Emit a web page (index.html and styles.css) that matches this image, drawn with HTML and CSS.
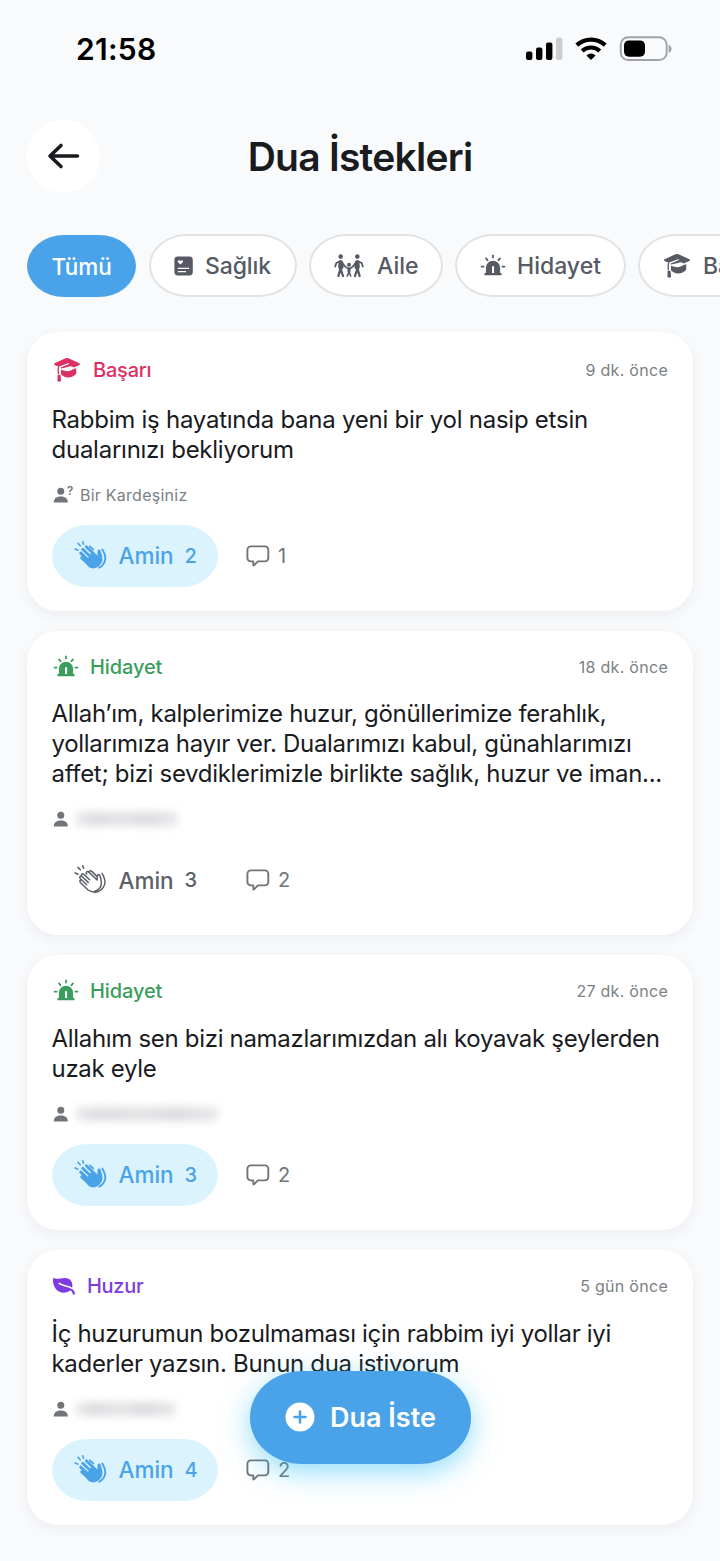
FILE: index.html
```html
<!DOCTYPE html>
<html lang="tr">
<head>
<meta charset="utf-8">
<title>Dua İstekleri</title>
<link rel="stylesheet" href="styles.css">
</head>
<body>
<svg class="sprite" aria-hidden="true">
  <symbol id="cap" viewBox="0 0 28 26">
    <path d="M1.6 6.2 12.5 1.3q1.5-.7 3 0L26.4 6.2q1.5.8 0 1.7L20.6 10.6c-1.7-1.6-3.6-1.7-5.6-.6L8.2 11.6l-1-.9 8.3-3.4c1-.6.5-1.4-.5-1.1L5.6 9.7 1.6 8q-1.4-.9 0-1.8Z" fill="currentColor"/>
    <path d="M8 12.8c3 .6 5.4 1.9 8.2 1.2 3.2-.8 4-2.3 7-2.8v5.6c-1.7 2.5-5 3.6-8 3.6-3.2 0-5.7-1.1-7.2-3.1Z" fill="currentColor"/>
    <path d="M5.6 9.8c-.7 2.4-.5 4.9-.2 7.4" fill="none" stroke="currentColor" stroke-width="1.3"/>
    <path d="M4.6 17.8h2.9l.5 5.8q-.6 1.2-1.8 1.2t-1.8-1.2Z" fill="currentColor"/>
  </symbol>
  <symbol id="siren" viewBox="0 0 26 24">
    <path fill-rule="evenodd" d="M5.9 19v-5.2a7.1 7.1 0 0 1 14.2 0V19h1.4v2.2H4.5V19ZM12 12.3v6.7h2.1v-6.7Z" fill="currentColor"/>
    <path d="M13 1.4v2M6 4.4l1.5 1.8M20 4.4l-1.5 1.8M1.6 12.6h2M22.4 12.6h2" fill="none" stroke="currentColor" stroke-width="1.8" stroke-linecap="round"/>
  </symbol>
  <symbol id="family" viewBox="0 0 30 24">
    <g fill="none" stroke="currentColor" stroke-linecap="round" stroke-linejoin="round">
      <path d="M6.5 7.5v7L4.4 22M6.5 14.5 9 22M23.5 7.5v7L25.6 22M23.5 14.5 21 22" stroke-width="2.3"/>
      <path d="M6 7.3 2.3 9 1.2 12.5M7.5 7.5 10.5 12M24 7.3 27.7 9l1.1 3.5M22.5 7.5 19.5 12" stroke-width="1.8"/>
      <path d="M15 14v4l-1.7 4M15 18l1.7 4M10.8 12.2 13.5 14.3h3l2.7-2.1" stroke-width="1.6"/>
    </g>
    <path d="M4.6 6.8h4l1 6.5-1.1 2H5l-.8-2ZM21.4 6.8h4l.4 6.5-.8 2h-3.5l-1.1-2ZM13.3 13.8h3.4l-.3 5h-2.8Z" fill="currentColor"/>
    <circle cx="6.7" cy="2.6" r="2.3" fill="currentColor"/><circle cx="23.3" cy="2.6" r="2.3" fill="currentColor"/><circle cx="15" cy="10.7" r="2" fill="currentColor"/>
  </symbol>
  <symbol id="record" viewBox="0 0 20 20">
    <rect x=".4" y=".6" width="18.4" height="18.8" rx="3.4" fill="currentColor"/>
    <path d="M6.4 8.6 4 6.2C3 4.9 5.1 3.4 6.4 4.9 7.7 3.4 9.8 4.9 8.8 6.2Z" fill="#fff"/>
    <path d="M3.8 12.4h11.4M3.8 15.7h8.2" stroke="#fff" stroke-width="1.2" fill="none"/>
  </symbol>
  <symbol id="leaf" viewBox="0 0 24 20">
    <path d="M1.2 1.7C5 4.2 9.500 1.400 14 2c4.600.8 6.600 4 6.400 8.600-.3 1.600-.8 2.800-1.500 3.500C14 18.200 7.500 17.400 4 13.300 1.600 10.300.4 5.500 1.200 1.700Z" fill="currentColor"/>
    <path d="M19.300 13.800q2 1 2.500 3.700" fill="none" stroke="currentColor" stroke-width="2.300" stroke-linecap="round"/>
    <path d="M7.200 7.400c4 3.400 9 1.600 12.600 4.800" fill="none" stroke="#fff" stroke-width="1.500" stroke-linecap="round"/>
  </symbol>
  <symbol id="person" viewBox="0 0 16 16">
    <circle cx="7.800" cy="4.300" r="3.500" fill="currentColor"/>
    <path d="M.8 15.400C.8 11.800 3 9.500 7.800 9.500s7 2.300 7 5.900Z" fill="currentColor"/>
  </symbol>
  <symbol id="bubble" viewBox="0 0 24 22">
    <path d="M4.700 1.400h14.300a3.300 3.300 0 0 1 3.300 3.300v8.400a3.300 3.300 0 0 1-3.300 3.300h-7.100l-3.900 3.900q-.7.500-.7-.4v-3.500H4.700a3.300 3.300 0 0 1-3.300-3.300V4.700a3.300 3.300 0 0 1 3.300-3.300Z" fill="none" stroke="currentColor" stroke-width="1.900" stroke-linejoin="round"/>
  </symbol>
  <symbol id="sparks" viewBox="0 0 34 32">
    <path d="M2.200 8.900 5 10.200M5.100 3.400l2.100 2.400M9.800 1.700l.7 2.600" fill="none" stroke="currentColor" stroke-width="1.600" stroke-linecap="round"/>
  </symbol>
  <symbol id="clap" viewBox="0 0 34 32">
    <use href="#sparks"/>
    <path d="M13.300 6.800 23 16M9.700 9.200 21 20M7.700 13.100 19 23.500M8.700 17.800 17 25.300" fill="none" stroke="currentColor" stroke-width="2.900" stroke-linecap="round"/>
    <path d="M18.500 12.500 24.300 16 24.600 11c.2-2.100 2.500-2 3.100 0 1.100 4.200 3.200 8 .4 12.600-3 4.900-8 6.200-12.600 3.200L12 22.500Z" fill="currentColor"/>
    <path d="M16.800 6.300 20.300 9.500" fill="none" stroke="currentColor" stroke-width="1.800" stroke-linecap="round"/>
    <path d="M29.300 9.500C31.500 13 33 16 32.100 20c-.8 3.600-3 6.200-5.800 7.700" fill="none" stroke="currentColor" stroke-width="1.900" stroke-linecap="round"/>
  </symbol>
  <symbol id="clap-line" viewBox="0 0 34 32">
    <use href="#sparks"/>
    <g fill="none" stroke="currentColor" stroke-width="1.500" stroke-linecap="round" stroke-linejoin="round">
      <path d="m16.600 15.800-5.700-5.400c-1.800-1.600-3.500.6-1.900 2.100l6.200 5.900M9 12.500c-1.900-1.100-3 1-1.600 2.300l6.300 5.900M8.600 16.100c-1.800-.6-2.400 1.300-1 2.600l7.200 7c4 3.500 9.600 2 12.400-2.300 2.400-3.900.9-7.500-.1-11.400-.5-2-2.500-1.800-2.700 0l-.3 4-8.200-7.900c-1.700-1.500-3.400.2-2.300 1.900M15.700 7.900c.8-1.800 2.400-1.300 3.400-.3l4.500 4.500"/>
      <path d="M29.100 9.400c2.200 3.900 3.800 7.100 2.600 11-1.300 4.100-5.300 7.800-10.200 8"/>
    </g>
  </symbol>
</svg>

<div class="statusbar">
  <span class="clock">21:58</span>
  <svg class="signal" viewBox="0 0 38 26"><rect x="1" y="15.500" width="6.400" height="8.500" rx="2"/><rect x="11" y="11.500" width="6.400" height="12.500" rx="2"/><rect x="21" y="6.500" width="6.400" height="17.500" rx="2"/><rect class="off" x="31" y="1.500" width="6.400" height="22.500" rx="2"/></svg>
  <svg class="wifi" viewBox="0 0 34 26"><path d="M2.800 9.100C10.800 1.700 23.200 1.700 31.200 9.100" stroke-width="4.300"/><path d="M8.200 15C13.200 10.300 20.800 10.300 25.800 15" stroke-width="4.100"/><path class="dot" d="M12.400 19.400q4.600-3.800 9.200 0L17 24.100Z"/></svg>
  <svg class="battery" viewBox="0 0 54 26"><rect class="shell" x="1.700" y="1.200" width="46" height="22.800" rx="7.500"/><rect x="5" y="4.400" width="21" height="16.400" rx="5"/><path class="tip" d="M49.700 8.700q2.800 1 2.800 4t-2.800 4Z"/></svg>
</div>

<header class="topbar">
  <span class="back"><svg viewBox="0 0 34 28"><path d="M14 3.500 3 14l11 10.500M3.500 14H30.500"/></svg></span>
  <h1>Dua İstekleri</h1>
</header>

<nav class="chips">
  <span class="chip active">Tümü</span>
  <span class="chip health"><svg class="i-record"><use href="#record"/></svg><b>Sağlık</b></span>
  <span class="chip kin"><svg class="i-family"><use href="#family"/></svg><b>Aile</b></span>
  <span class="chip guide"><svg class="i-siren"><use href="#siren"/></svg><b>Hidayet</b></span>
  <span class="chip success"><svg class="i-cap"><use href="#cap"/></svg><b>Başarı</b></span>
</nav>

<main class="feed">
  <article class="card">
    <div class="head tall red"><svg class="i-cap"><use href="#cap"/></svg><b>Başarı</b><time>9 dk. önce</time></div>
    <p class="body loose"><span>Rabbim iş hayatında bana yeni bir yol nasip etsin</span><span>dualarınızı bekliyorum</span></p>
    <div class="author"><svg class="i-person"><use href="#person"/></svg><i>?</i><span class="name">Bir Kardeşiniz</span></div>
    <div class="actions"><span class="amin on"><svg><use href="#clap"/></svg><b>Amin</b><em>2</em></span><svg class="i-bubble"><use href="#bubble"/></svg><span class="count">1</span></div>
  </article>
  <article class="card">
    <div class="head green"><svg class="i-siren"><use href="#siren"/></svg><b>Hidayet</b><time>18 dk. önce</time></div>
    <p class="body"><span>Allah’ım, kalplerimize huzur, gönüllerimize ferahlık,</span><span>yollarımıza hayır ver. Dualarımızı kabul, günahlarımızı</span><span>affet; bizi sevdiklerimizle birlikte sağlık, huzur ve iman...</span></p>
    <div class="author"><svg class="i-person"><use href="#person"/></svg><span class="masked m1"></span></div>
    <div class="actions"><span class="amin"><svg><use href="#clap-line"/></svg><b>Amin</b><em>3</em></span><svg class="i-bubble"><use href="#bubble"/></svg><span class="count">2</span></div>
  </article>
  <article class="card">
    <div class="head green"><svg class="i-siren"><use href="#siren"/></svg><b>Hidayet</b><time>27 dk. önce</time></div>
    <p class="body"><span>Allahım sen bizi namazlarımızdan alı koyavak şeylerden</span><span>uzak eyle</span></p>
    <div class="author"><svg class="i-person"><use href="#person"/></svg><span class="masked m2"></span></div>
    <div class="actions"><span class="amin on"><svg><use href="#clap"/></svg><b>Amin</b><em>3</em></span><svg class="i-bubble"><use href="#bubble"/></svg><span class="count">2</span></div>
  </article>
  <article class="card">
    <div class="head purple"><svg class="i-leaf"><use href="#leaf"/></svg><b>Huzur</b><time>5 gün önce</time></div>
    <p class="body"><span>İç huzurumun bozulmaması için rabbim iyi yollar iyi</span><span>kaderler yazsın. Bunun dua istiyorum</span></p>
    <div class="author"><svg class="i-person"><use href="#person"/></svg><span class="masked m3"></span></div>
    <div class="actions"><span class="amin on"><svg><use href="#clap"/></svg><b>Amin</b><em>4</em></span><svg class="i-bubble"><use href="#bubble"/></svg><span class="count">2</span></div>
  </article>
</main>

<div class="fab"><svg viewBox="0 0 30 30"><circle cx="15" cy="15" r="14.500"/><path d="M15 9.500v11M9.500 15h11"/></svg><span>Dua İste</span></div>
</body>
</html>
```

FILE: styles.css
```css
* { box-sizing: border-box; }
html { overflow: hidden; }
body {
  margin: 0;
  position: relative;
  width: 720px;
  height: 1561px;
  overflow: hidden;
  background: #f8fafc;
  color: #1a1b1e;
  font-family: Inter, "Liberation Sans", sans-serif;
}
svg { display: block; flex: none; }
b, em, i { font-weight: inherit; font-style: normal; }
.sprite { position: absolute; width: 0; height: 0; }

.statusbar { display: flex; align-items: center; height: 98px; padding: 0 47px 0 76px; color: #000; }
.clock { flex: 1; font-size: 30px; font-weight: 600; letter-spacing: .3px; }
.signal { width: 38px; height: 26px; }
.signal .off { fill: #ccced0; }
.wifi { width: 34px; height: 26px; margin-left: 11px; }
.wifi path { fill: none; stroke: #000; }
.wifi .dot { fill: #000; stroke: none; }
.battery { width: 54px; height: 26px; margin-left: 11px; }
.battery .shell { fill: none; stroke: #a0a2a4; stroke-width: 1.9; }
.battery .tip { fill: #a0a2a4; }

.topbar { display: grid; grid-template-columns: 73px 1fr 73px; align-items: center; height: 74px; margin: 21px 27px 0; }
.back { display: grid; place-items: center; width: 73px; height: 73px; border-radius: 50%; background: #fff; }
.back svg { width: 34px; height: 28px; fill: none; stroke: #1a1b1e; stroke-width: 3.6; stroke-linecap: round; stroke-linejoin: round; }
h1 { margin: 1px 0 0; font-size: 39px; line-height: 48px; font-weight: 600; text-align: center; letter-spacing: -.75px; white-space: nowrap; }

.chips { display: flex; gap: 12px; height: 64px; margin: 41px 0 0; padding-left: 27px; overflow: hidden; }
.chip {
  display: flex; align-items: center; flex: none; height: 63px; padding-left: 23px;
  border: 2px solid #e1e3e5; border-radius: 38px / 31.5px; background: #fff;
  color: #555a64; font-size: 23px; font-weight: 500; white-space: nowrap;
}
.chip.active { justify-content: center; width: 109px; margin: 1px 1px 0 0; height: 62px; padding: 0; border: 0; background: #4aa3e8; color: #fff; font-size: 22.5px; letter-spacing: -.1px; }
.health { width: 148px; } .health b { margin-left: 11px; letter-spacing: -.1px; }
.kin { width: 134px; } .kin b { margin-left: 13px; }
.guide { width: 171px; } .guide b { margin-left: 11px; }
.success { width: 160px; } .success b { margin-left: 12px; }
.i-record { width: 20px; height: 20px; }
.i-family { width: 30px; height: 24px; }
.i-siren { width: 26px; height: 24px; }
.i-cap { width: 28px; height: 26px; }

.feed { display: flex; flex-direction: column; gap: 20.2px; margin: 34px 27px 0; }
.card {
  display: flex; flex-direction: column; padding: 24px 25px;
  border-radius: 31px; background: #fff; box-shadow: 0 4px 14px rgba(30, 35, 45, .06);
}
.head { display: flex; align-items: center; height: 24px; font-size: 20px; font-weight: 500; }
.head.tall { height: 28px; }
.head .i-cap, .head .i-siren { margin-left: 1px; }
.head b { margin-left: 11px; letter-spacing: -.1px; }
.head.red b { margin-left: 12px; letter-spacing: -.2px; }
.i-leaf { width: 24px; height: 20px; }
.head.purple b { letter-spacing: -.3px; }
.red { color: #dd3062; } .green { color: #3b9d5c; } .purple { color: #7e3ce0; }
time { margin-left: auto; font-size: 16px; font-weight: 400; color: #7b7f84; letter-spacing: .28px; }
.body { display: flex; flex-direction: column; margin: 20.5px 0 20px; font-size: 24px; line-height: 30px; letter-spacing: -.31px; white-space: nowrap; }
.body.loose { letter-spacing: -.25px; }
.body span { margin-left: -.5px; }
.author { display: flex; align-items: center; height: 20px; color: #70757a; font-size: 16px; }
.i-person { width: 16px; height: 16px; margin-left: 1px; }
.author i { align-self: flex-start; margin-left: -2px; font-size: 11.5px; line-height: 12px; font-weight: 600; width: 7px; }
.name { margin-left: 6px; letter-spacing: .25px; color: #7b7f84; }
.masked { height: 14px; margin-left: 7px; border-radius: 4px; background: linear-gradient(90deg, #e8e9eb, #dbdcde 18%, #e2e3e5 45%, #dadbdd 70%, #e7e8ea); filter: blur(4px); }
.m1 { width: 102px; } .m2 { width: 142px; } .m3 { width: 100px; }
.actions { display: flex; align-items: center; height: 62px; margin-top: 20px; color: #70757a; }
.amin { display: flex; align-items: center; width: 166px; height: 62px; padding-left: 21px; border-radius: 36px / 31px; color: #5d6069; font-size: 22.5px; font-weight: 500; }
.amin svg { width: 34px; height: 32px; }
.amin b { width: 55px; margin-left: 11.5px; letter-spacing: 0; }
.amin em { margin-left: 11px; font-size: 20px; }
.amin.on { background: #dbf3fd; color: #4aa3e8; }
.i-bubble { width: 24px; height: 22px; margin-left: 28px; }
.count { margin-left: 8px; font-size: 20px; }

.fab {
  position: absolute; left: 250px; top: 1371px; width: 221px; height: 92.5px;
  display: flex; align-items: center; padding-left: 35px;
  border-radius: 52px / 46px; background: #4aa3e8; color: #fff;
  font-size: 27px; font-weight: 600; box-shadow: 0 8px 28px rgba(35, 190, 245, .5);
}
.fab svg { width: 30px; height: 30px; fill: #fff; }
.fab path { stroke: #4aa3e8; stroke-width: 2.6; stroke-linecap: round; }
.fab span { margin-left: 15px; padding-top: 1px; white-space: nowrap; }
```
